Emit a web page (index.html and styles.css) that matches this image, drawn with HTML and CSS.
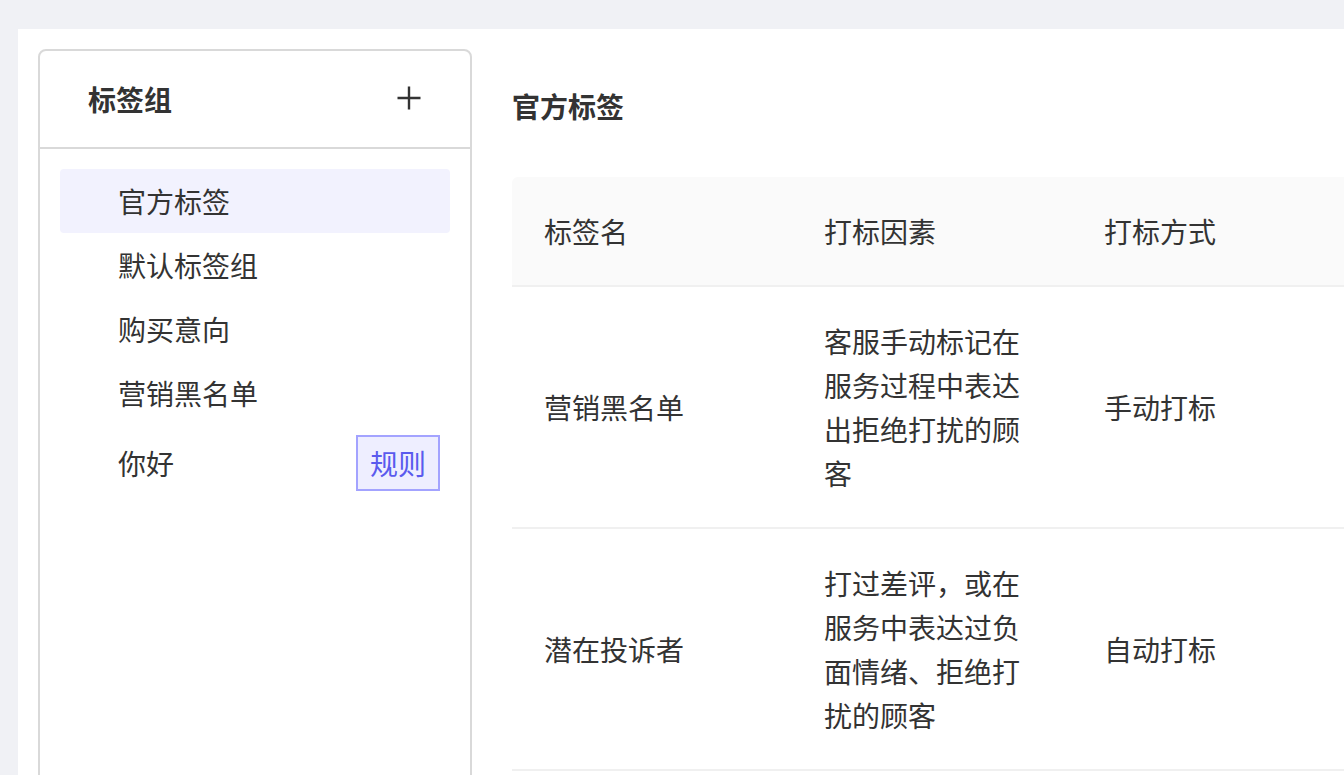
FILE: index.html
```html
<!DOCTYPE html>
<html lang="zh-CN">
<head>
<meta charset="utf-8">
<title>标签管理</title>
<link rel="stylesheet" href="styles.css">
</head>
<body>
<div class="page">
  <div class="card">
    <aside class="sidebar">
      <div class="sidebar-head">
        <span class="sidebar-title">标签组</span>
        <svg class="plus" width="24" height="24" viewBox="0 0 24 24"><path d="M12 0.5v23M0.5 12h23" stroke="#333" stroke-width="2.4" fill="none"/></svg>
      </div>
      <ul class="group-list">
        <li class="group-item active">官方标签</li>
        <li class="group-item">默认标签组</li>
        <li class="group-item">购买意向</li>
        <li class="group-item">营销黑名单</li>
        <li class="group-item with-btn"><span>你好</span><button class="rule-btn">规则</button></li>
      </ul>
    </aside>
    <main class="main">
      <h2 class="main-title">官方标签</h2>
      <table class="tag-table">
        <colgroup>
          <col class="col-std"><col class="col-std"><col class="col-std"><col class="col-rest">
        </colgroup>
        <thead>
          <tr><th>标签名</th><th>打标因素</th><th>打标方式</th><th></th></tr>
        </thead>
        <tbody>
          <tr><td>营销黑名单</td><td>客服手动标记在服务过程中表达出拒绝打扰的顾客</td><td>手动打标</td><td></td></tr>
          <tr><td>潜在投诉者</td><td>打过差评，或在服务中表达过负面情绪、拒绝打扰的顾客</td><td>自动打标</td><td></td></tr>
        </tbody>
      </table>
    </main>
  </div>
</div>
</body>
</html>
```
FILE: styles.css
```css
* { box-sizing: border-box; }
html, body { margin: 0; padding: 0; }
body {
  background: #f0f1f5;
  font-family: "Noto Sans CJK SC", "Noto Sans", sans-serif;
  color: #333;
  overflow: hidden;
}
.page {
  padding: 29px 0 0 18px;
  height: 775px;
}
.card {
  background: #fff;
  display: flex;
  gap: 40px;
  padding: 20px 0 0 20px;
  height: 900px;
  width: 1400px;
}
.sidebar {
  width: 434px;
  flex: none;
  border: 2px solid #d9d9d9;
  border-radius: 8px 8px 0 0;
  height: 900px;
}
.sidebar-head {
  height: 98px;
  border-bottom: 2px solid #d9d9d9;
  display: flex;
  align-items: center;
  justify-content: space-between;
  padding: 0 49px 0 48px;
}
.sidebar-title {
  font-size: 28px;
  font-weight: 700;
  line-height: 44px;
}
.plus { display: block; margin-top: -2px; }
.group-list {
  list-style: none;
  margin: 0;
  padding: 20px 20px;
}
.group-item {
  height: 64px;
  display: flex;
  align-items: center;
  justify-content: space-between;
  padding: 0 10px 0 58px;
  font-size: 28px;
  line-height: 44px;
  border-radius: 4px;
}
.group-item.active { background: #f2f2fe; }
.group-item.with-btn { height: 76px; }
.rule-btn {
  width: 84px;
  height: 56px;
  border: 2px solid #a3a3ff;
  background: #eeeeff;
  color: #5a5aee;
  font-family: inherit;
  font-size: 28px;
  line-height: 52px;
  padding: 0;
  cursor: pointer;
}
.main {
  flex: 1;
  padding-top: 35px;
}
.main-title {
  margin: 0 0 49px;
  font-size: 28px;
  font-weight: 700;
  line-height: 44px;
}
.tag-table {
  border-collapse: collapse;
  table-layout: fixed;
  width: 1140px;
  font-size: 28px;
  line-height: 44px;
}
.col-std { width: 280px; }
.col-rest { width: 300px; }
.tag-table th, .tag-table td {
  padding: 32px 32px;
  text-align: left;
  vertical-align: middle;
  border-bottom: 2px solid #f0f0f0;
}
.tag-table th {
  font-weight: 400;
  background: #fafafa;
}
.tag-table th:first-child { border-top-left-radius: 6px; }
```
